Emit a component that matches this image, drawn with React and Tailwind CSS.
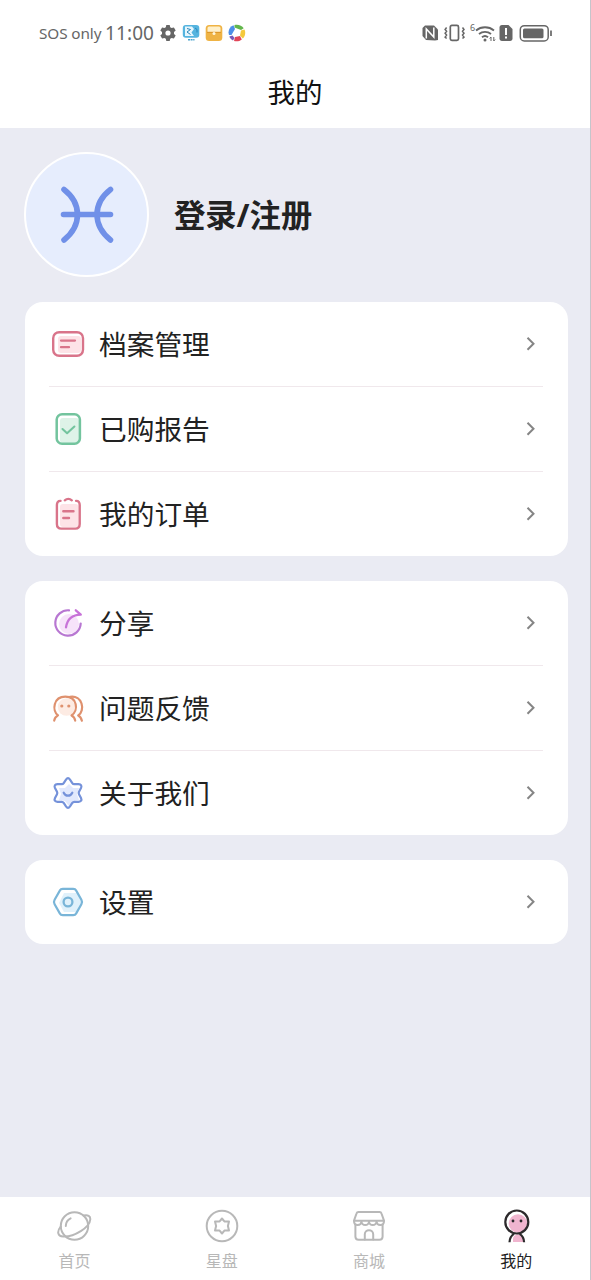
import React, { useState } from "react";

const ICON = "w-9 h-9 shrink-0";

function ArchiveIcon() {
  return (
    <svg viewBox="0 0 36 36" className={ICON} fill="none" strokeLinecap="round">
      <rect x="8" y="10" width="23" height="17" rx="3" fill="#fde3e7" />
      <rect x="3.2" y="6.2" width="29.8" height="23.6" rx="6" stroke="#d9748a" strokeWidth="2.4" />
      <path d="M11 14.6h14M11 21.2h8" stroke="#d9748a" strokeWidth="2.3" />
    </svg>
  );
}

function ReportIcon() {
  return (
    <svg viewBox="0 0 36 36" className={ICON} fill="none" strokeLinecap="round" strokeLinejoin="round">
      <rect x="10" y="7" width="19" height="25" rx="3" fill="#def3e8" />
      <rect x="6.7" y="3.2" width="23.2" height="29.6" rx="5.4" stroke="#73c49e" strokeWidth="2.5" />
      <path d="M12.5 18l4.6 4.2 7.3-6.7" stroke="#73c49e" strokeWidth="2.1" />
    </svg>
  );
}

function OrderIcon() {
  return (
    <svg viewBox="0 0 36 36" className={ICON} fill="none" strokeLinecap="round">
      <rect x="10" y="8" width="18.5" height="23" rx="3" fill="#fde3e7" />
      <path
        d="M10.5 4.9C8 4.8 6.9 6.4 6.9 9v19c0 2.9 1.5 4.6 4.4 4.6h14c2.9 0 4.4-1.7 4.4-4.6V9c0-2.6-1.1-4.2-3.6-4.1"
        stroke="#d9748a"
        strokeWidth="2.4"
      />
      <path d="M14.8 4.3c2-1.7 5-1.7 7 0" stroke="#d9748a" strokeWidth="2.4" />
      <path d="M13.3 15.3h10.2M13.3 22h5.7" stroke="#d9748a" strokeWidth="2.4" />
    </svg>
  );
}

function ShareIcon() {
  return (
    <svg viewBox="0 0 36 36" className={ICON} fill="none" strokeLinecap="round" strokeLinejoin="round">
      <circle cx="19" cy="19" r="10" fill="#f7e3fa" />
      <path d="M19 5.3A12.7 12.7 0 1 0 30.7 18.5" stroke="#b877d2" strokeWidth="2.2" />
      <path d="M16 22.3C17.2 15 22 9.8 30.8 9.7L25.8 5.3" stroke="#c873d8" strokeWidth="2.3" />
    </svg>
  );
}

function FeedbackIcon() {
  return (
    <svg viewBox="0 0 36 36" className={ICON} fill="none" strokeLinecap="round" strokeLinejoin="round">
      <circle cx="16.5" cy="17" r="8.7" fill="#fdebe3" />
      <g stroke="#df916e" strokeWidth="2.2">
        <path d="M4.2 30.7c.3-2.5 1.8-4.2 3.8-5.3C1.7 20.6 3.4 6.7 15.3 6.7s13.7 13.9 6.2 18.7c2.200 1.100 3.400 2.700 3.700 5.300" />
        <path d="M20 6.900C32.500 4.700 35.500 20.500 28.200 25.500c2 1 3.100 2.600 3.700 5.200" />
      </g>
      <circle cx="11.8" cy="16" r="1.6" fill="#df916e" />
      <circle cx="18.8" cy="16" r="1.6" fill="#df916e" />
    </svg>
  );
}

function AboutIcon() {
  return (
    <svg viewBox="0 0 36 36" className={ICON} fill="none" strokeLinecap="round" strokeLinejoin="round">
      <path d="M19 9l4 4 6 0-2 6 2 6-6 1-4 5-4-5-6-1 2-6-2-6 6 0z" fill="#e2e9fd" />
      <path
        d="M16 4.6Q18 1.700 20 4.6L22.3 8.1Q23 9.2 24.3 9.2L28.5 9.2Q32.5 9.6 31 13L29 16.8Q28.4 18 29 19.2L31 23Q32.5 26.4 28.5 26.8L24.3 26.8Q23 26.8 22.3 27.9L20 31.4Q18 34.3 16 31.4L13.7 27.9Q13 26.8 11.7 26.8L7.5 26.8Q3.5 26.4 5 23L7 19.2Q7.6 18 7 16.8L5 13Q3.5 9.6 7.5 9.2L11.7 9.2Q13 9.2 13.7 8.1Z"
        stroke="#7592da"
        strokeWidth="2.2"
      />
      <path d="M13.7 17.7c1.9 4 6.7 4 8.6 0" stroke="#7592da" strokeWidth="2.2" />
    </svg>
  );
}

function SettingsIcon() {
  return (
    <svg viewBox="0 0 36 36" className={ICON} fill="none" strokeLinejoin="round">
      <path d="M14 9h13l5 9-5 10H14l-5-9z" fill="#e0f1fb" />
      <path
        d="M12.8 4.9h10.4c1.4 0 2.3.4 3 1.7l5.2 9.1c.8 1.4.8 3.2 0 4.6l-5.2 9.1c-.7 1.3-1.6 1.7-3 1.7H12.8c-1.4 0-2.3-.4-3-1.7l-5.2-9.1c-.8-1.4-.8-3.2 0-4.6l5.2-9.1c.7-1.3 1.6-1.7 3-1.7z"
        stroke="#79b5d8"
        strokeWidth="2.2"
      />
      <circle cx="18" cy="18" r="4.4" stroke="#79b5d8" strokeWidth="2.3" />
    </svg>
  );
}

function HomeTabIcon() {
  return (
    <svg viewBox="0 0 36 36" className={ICON} fill="none" stroke="#b8b8b8" strokeWidth="2" strokeLinecap="round">
      <circle cx="17.5" cy="18" r="13.7" />
      <path d="M26.5 7.500C31 6.500 33.500 8 33.300 11.300C32.800 19.500 17.500 29 6.200 28.500C.5 28.200-.3 23.500 3.700 18.500" />
      <path d="M8.8 18c.1-3.7 1.8-6.3 4.8-7.7" />
    </svg>
  );
}

function ChartTabIcon() {
  return (
    <svg viewBox="0 0 36 36" className={ICON} fill="none" stroke="#b8b8b8" strokeWidth="2" strokeLinejoin="round">
      <circle cx="18" cy="18" r="15.3" />
      <path d="M18 10.5l2.4 2.9 4.6.1-1.1 4.5 1.1 4.5-4.6.1-2.4 2.9-2.4-2.9-4.6-.1 1.1-4.5-1.1-4.5 4.6-.1z" />
    </svg>
  );
}

function ShopTabIcon() {
  return (
    <svg viewBox="0 0 36 36" className={ICON} fill="none" stroke="#b8b8b8" strokeWidth="2" strokeLinecap="round" strokeLinejoin="round">
      <path d="M7.5 4h21c1 0 1.700.5 2 1.500L33 12.700H3l2.500-7.200C5.800 4.500 6.500 4 7.500 4z" />
      <path d="M3 13c0 5.300 7 5.300 7.5.5.5 4.800 7 4.800 7.5 0 .5 4.800 7 4.800 7.5 0 .5 4.800 7.5 4.800 7.5-.5" />
      <path d="M4.4 17v11.5c0 2 1.2 3.2 3.2 3.2h20.8c2 0 3.2-1.2 3.2-3.2V17" />
      <path d="M13.8 31.5v-5.3c0-5.4 8.4-5.4 8.4 0v5.3" />
    </svg>
  );
}

function MineTabIcon() {
  return (
    <svg viewBox="0 0 36 36" className={ICON} fill="none" stroke="#2c2a2c" strokeWidth="2.2">
      <circle cx="20" cy="15.500" r="9.300" fill="#f0b5cf" stroke="none" />
      <path d="M15 34v-3c0-6 10-6 11 0v3z" fill="#f0b5cf" stroke="none" />
      <circle cx="18.8" cy="14" r="11.5" />
      <path d="M11.5 34.200c.2-3.900 1.700-6.500 4.500-8.300M21.600 25.900c2.800 1.800 4.300 4.400 4.500 8.300" />
      <circle cx="15" cy="13" r="1.400" fill="#2c2a2c" stroke="none" />
      <circle cx="23" cy="13" r="1.400" fill="#2c2a2c" stroke="none" />
    </svg>
  );
}

const menuGroups = [
  [
    { label: "档案管理", Icon: ArchiveIcon },
    { label: "已购报告", Icon: ReportIcon },
    { label: "我的订单", Icon: OrderIcon },
  ],
  [
    { label: "分享", Icon: ShareIcon },
    { label: "问题反馈", Icon: FeedbackIcon },
    { label: "关于我们", Icon: AboutIcon },
  ],
  [{ label: "设置", Icon: SettingsIcon }],
];

const tabs = [
  { label: "首页", Icon: HomeTabIcon },
  { label: "星盘", Icon: ChartTabIcon },
  { label: "商城", Icon: ShopTabIcon },
  { label: "我的", Icon: MineTabIcon },
];

function StatusBar() {
  return (
    <div className="flex h-[66px] items-center justify-between pl-[39px] pr-[38px] text-[#666]">
      <div className="flex items-center">
        <span className="w-[66px] whitespace-nowrap text-[15.3px] leading-5 tracking-[-0.1px]">SOS only</span>
        <span className="w-[54px] whitespace-nowrap text-[19px] leading-5 tracking-[0.1px]">11:00</span>
        {/* Engranaje */}
        <svg viewBox="0 0 18 18" className="h-[18px] w-[18px]">
          <path
            d="M7.3 1h3.4l.5 2.300 1.400.8 2.300-.7 1.800 3.100-1.700 1.600v1.800l1.700 1.600-1.800 3.100-2.300-.7-1.400.8-.5 2.300H7.300l-.5-2.300-1.400-.8-2.300.7-1.800-3.100L3 9.900V8.100L1.300 6.500l1.800-3.100 2.300.7 1.400-.8zM9 6.400a2.600 2.600 0 1 0 0 5.200 2.600 2.600 0 0 0 0-5.200z"
            fill="#666"
            fillRule="evenodd"
          />
        </svg>
        <svg viewBox="0 0 18 18" className="ml-[5px] h-[18px] w-[18px]">
          <rect x=".8" y="1" width="16.5" height="12.8" rx="3" fill="#55b4df" />
          <path d="M3 2.5h7l2 2.5-2.500 3.500L12 12H3z" fill="#e6f6fd" />
          <path d="M5 4.500l3.500 1L5 8l3.500 2.500M13 4l2 1.500v3" stroke="#2b86b8" fill="none" />
          <path d="M6 15.700h6.500" stroke="#4ba4cd" strokeWidth="1.6" strokeDasharray="2 .6" />
        </svg>
        <svg viewBox="0 0 18 18" className="ml-[5px] h-[18px] w-[18px]">
          <rect x=".7" y="1" width="16.6" height="16" rx="3.5" fill="#efb344" />
          <path d="M4 2.600h10q1.500 0 1.500 1.500v4h-13v-4q0-1.500 1.500-1.500z" fill="#fff0c9" />
          <path d="M2 8.300h14" stroke="#d99225" fill="none" />
          <circle cx="9" cy="9.5" r="1.5" fill="#fff5da" />
        </svg>
        <svg viewBox="0 0 18 18" className="ml-[5px] h-[18px] w-[18px]">
          <path d="M1 11C-.5 6.500 2 2.500 5.500 1.300L7 5 3.500 11z" fill="#4c8ee8" />
          <path d="M6.500 1C10 0 14 1.500 15.700 4.300L13 6 6.500 3.500z" fill="#62b64b" />
          <path d="M16.500 5.500c1.500 3.500.5 7-1.700 9L12 11.500l1-5z" fill="#f5c93c" />
          <path d="M13.800 15.500C11.500 17.500 8.500 17.700 6 17l1-4 5-1z" fill="#e14658" />
          <path d="M5 16.500c-1.800-.9-3-2.300-3.700-4l3.200-1L6.500 14z" fill="#7c58b8" />
        </svg>
      </div>

      <svg viewBox="0 -6 130 32" className="h-8 w-[130px]" fill="none">
        {/* NFC */}
        <path d="M3 2.500h9l4 4V17l-3 .5-9-.5-3.500-4V5z" fill="#666" />
        <path d="M4.300 15.500V6l7.500 8V4.500" stroke="#fff" strokeWidth="1.5" />
        {/* Vibración */}
        <rect x="28.3" y="2.300" width="8.2" height="15" rx="1.6" stroke="#666" strokeWidth="1.7" />
        <path d="M24.600 4.500l-1.500 2 1.500 1.800-1.500 2 1.500 1.800-1.500 2 1.500 1.400M40.500 4.500l1.500 2-1.500 1.800 1.500 2-1.500 1.800 1.500 2-1.500 1.400" stroke="#666" strokeWidth="1.5" />
        <text x="48" y="7.8" fontSize="9" fill="#666">6</text>
        <path d="M54 7.500c5.200-4.300 12.800-4.300 18 0M57 11c3.500-2.800 8.500-2.800 12 0M60 14.200c1.800-1.500 4.200-1.500 6 0" stroke="#666" strokeWidth="1.9" />
        <circle cx="63" cy="16.9" r="1.5" fill="#666" />
        <path d="M69 18v-4l-1.300 1.500M71.800 14v4l1.300-1.500" stroke="#666" strokeWidth="1" />
        <path d="M80 2h6.500l4 4v9.500c0 1.600-.9 2.500-2.500 2.500h-8c-1.600 0-2.500-.9-2.500-2.500v-11C77.500 2.900 78.400 2 80 2z" fill="#666" />
        <path d="M84 5v7M84 13.500v2" stroke="#fff" strokeWidth="2" />
        {/* Batería */}
        <rect x="98.3" y="2.700" width="27.9" height="15.2" rx="4" stroke="#666" strokeWidth="1.5" />
        <rect x="101" y="5.400" width="20.5" height="9.8" rx="1.5" fill="#666" />
        <path d="M129 7.500v5.500" stroke="#666" strokeWidth="1.7" />
      </svg>
    </div>
  );
}

function MenuRow({ label, Icon, last }) {
  return (
    <>
      <button type="button" className="flex h-[84px] w-full items-center pl-[25px] pr-[29px]">
        <Icon />
        <span className="ml-[13px] flex-1 text-left text-[27.7px] leading-9 text-[#222]">{label}</span>
        <svg viewBox="0 0 16 16" className="h-4 w-4" fill="none" stroke="#858585" strokeWidth="2">
          <path d="M4.500 1.700l6 6-6 6" />
        </svg>
      </button>
      {!last && <div className="ml-6 mr-[25px] h-px bg-[#f0e8ec]" />}
    </>
  );
}

export default function App() {
  const [activeTab, setActiveTab] = useState("我的");

  return (
    <div className="flex h-[1280px] w-[591px] flex-col overflow-hidden border-r border-[#c5c5cb] bg-[#eaebf3] font-['Noto_Sans','Noto_Sans_CJK_SC',sans-serif]">
      <header className="h-32 shrink-0 bg-white">
        <StatusBar />
        <h1 className="pt-[9px] text-center text-[27.5px] leading-9 text-[#111]">我的</h1>
      </header>

      <main className="flex flex-1 flex-col gap-[25px] pl-[25px] pr-[22px] pt-6">
        {/* Perfil */}
        <div className="-ml-px flex h-[125px] items-center gap-[25px]">
          <div className="flex h-[125px] w-[125px] items-center justify-center rounded-full border-2 border-white bg-[#e6edfd]">
            <svg viewBox="0 0 64 64" className="h-16 w-16" fill="none" stroke="#7090e8" strokeWidth="5.6" strokeLinecap="round">
              <path d="M9 6.500c18 14 18 36 0 50.500M55.500 6.500c-18 14-18 36 0 50.500M8.500 31.500h47" />
            </svg>
          </div>
          <span className="text-[31.3px] font-bold leading-9 text-[#222]">登录/注册</span>
        </div>

        {menuGroups.map((group, i) => (
          <section key={i} className="rounded-[18px] bg-white">
            {group.map((item, j) => (
              <MenuRow key={item.label} {...item} last={j === group.length - 1} />
            ))}
          </section>
        ))}
      </main>

      <nav className="flex h-[83px] shrink-0 bg-white pl-px">
        {tabs.map(({ label, Icon }) => (
          <button
            key={label}
            type="button"
            onClick={() => setActiveTab(label)}
            className="flex flex-1 flex-col items-center pt-[11px]"
          >
            <Icon />
            <span
              className={`mt-[5px] text-base leading-6 ${
                activeTab === label ? "text-[#222]" : "text-[#b8b8b8]"
              }`}
            >
              {label}
            </span>
          </button>
        ))}
      </nav>
    </div>
  );
}
